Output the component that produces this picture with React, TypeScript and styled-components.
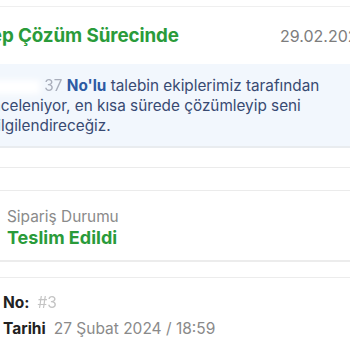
import React from "react";
import styled, { createGlobalStyle } from "styled-components";

const Global = createGlobalStyle`
  html, body { margin: 0; padding: 0; background: #ffffff; }
  body { font-family: Inter, "Noto Sans", "Liberation Sans", sans-serif; overflow: hidden; }
`;

const Page = styled.div`
  width: 350px;
  height: 350px;
  overflow: hidden;
  background: #ffffff;
  padding-top: 6px;
  box-sizing: border-box;
`;

const RequestCard = styled.section`
  border-top: 1px solid #efefef;
  margin-left: -40px;
  width: 460px;
  border-bottom: 2px solid #e9ecef;
`;

const HeaderRow = styled.div`
  height: 57px;
  display: flex;
  align-items: center;
  padding: 0 0 0 4px;
`;

const StatusTitle = styled.span`
  font-size: 18.8px;
  font-weight: 700;
  color: #2a9b3a;
  letter-spacing: -0.1px;
`;

const DateText = styled.span`
  margin-left: auto;
  font-size: 16px;
  color: #7d7d7d;
  width: 140px;
`;

const InfoBox = styled.div`
  background: #f2f7fd;
  padding: 12px 80px 10px 28px;
  font-size: 15.3px;
  line-height: 20px;
  color: #384a72;
`;

const Redacted = styled.span`
  display: inline-block;
  width: 52px;
  height: 14px;
  background: #ffffff;
  filter: blur(3px);
  vertical-align: middle;
`;

const Faint = styled.span<{ $tone?: string }>`
  display: inline-block;
  color: ${(p) => p.$tone || "#a9aebb"};
  filter: blur(0.6px);
`;

const Strong = styled.span`
  font-weight: 700;
  color: #2d5aa3;
`;

const Band = styled.div`
  margin-top: 19px;
  height: 22px;
  border-top: 1px solid #ebebeb;
  border-bottom: 1px solid #ebebeb;
`;

const StatusSection = styled.section`
  padding: 16px 7px 12px;
  border-bottom: 2px solid #ececec;
  display: flex;
  flex-direction: column;
  gap: 1px;
`;

const Label = styled.span`
  font-size: 15.4px;
  color: #8a8a8a;
`;

const DeliveredText = styled.span`
  font-size: 18px;
  font-weight: 700;
  color: #2a9b3a;
`;

const OrderSection = styled.section`
  margin-top: 15px;
  border-top: 1px solid #ececec;
  padding: 15px 3px 0;
  display: flex;
  flex-direction: column;
  gap: 6px;
`;

const OrderRow = styled.div`
  font-size: 15.5px;
  line-height: 20px;
  display: flex;
  gap: 8px;
  align-items: center;
`;

const Key = styled.span`
  font-weight: 700;
  color: #222222;
`;

const Value = styled.span`
  color: #8a8a8a;
`;

export default function App() {
  return (
    <>
      <Global />
      <Page>
        <RequestCard>
          <HeaderRow>
            <StatusTitle>Talep Çözüm Sürecinde</StatusTitle>
            <DateText>29.02.2024</DateText>
          </HeaderRow>
          <InfoBox>
            <Redacted /> <Faint>37</Faint> <Strong>No'lu</Strong> talebin ekiplerimiz tarafından
            inceleniyor, en kısa sürede çözümleyip seni bilgilendireceğiz.
          </InfoBox>
        </RequestCard>
        <Band />
        <StatusSection>
          <Label>Sipariş Durumu</Label>
          <DeliveredText>Teslim Edildi</DeliveredText>
        </StatusSection>
        <OrderSection>
          <OrderRow>
            <Key>No:</Key>
            <Value>
              <Faint $tone="#c4c4c4">#3</Faint>
            </Value>
          </OrderRow>
          <OrderRow>
            <Key>Tarihi</Key>
            <Value>27 Şubat 2024 / 18:59</Value>
          </OrderRow>
        </OrderSection>
      </Page>
    </>
  );
}
